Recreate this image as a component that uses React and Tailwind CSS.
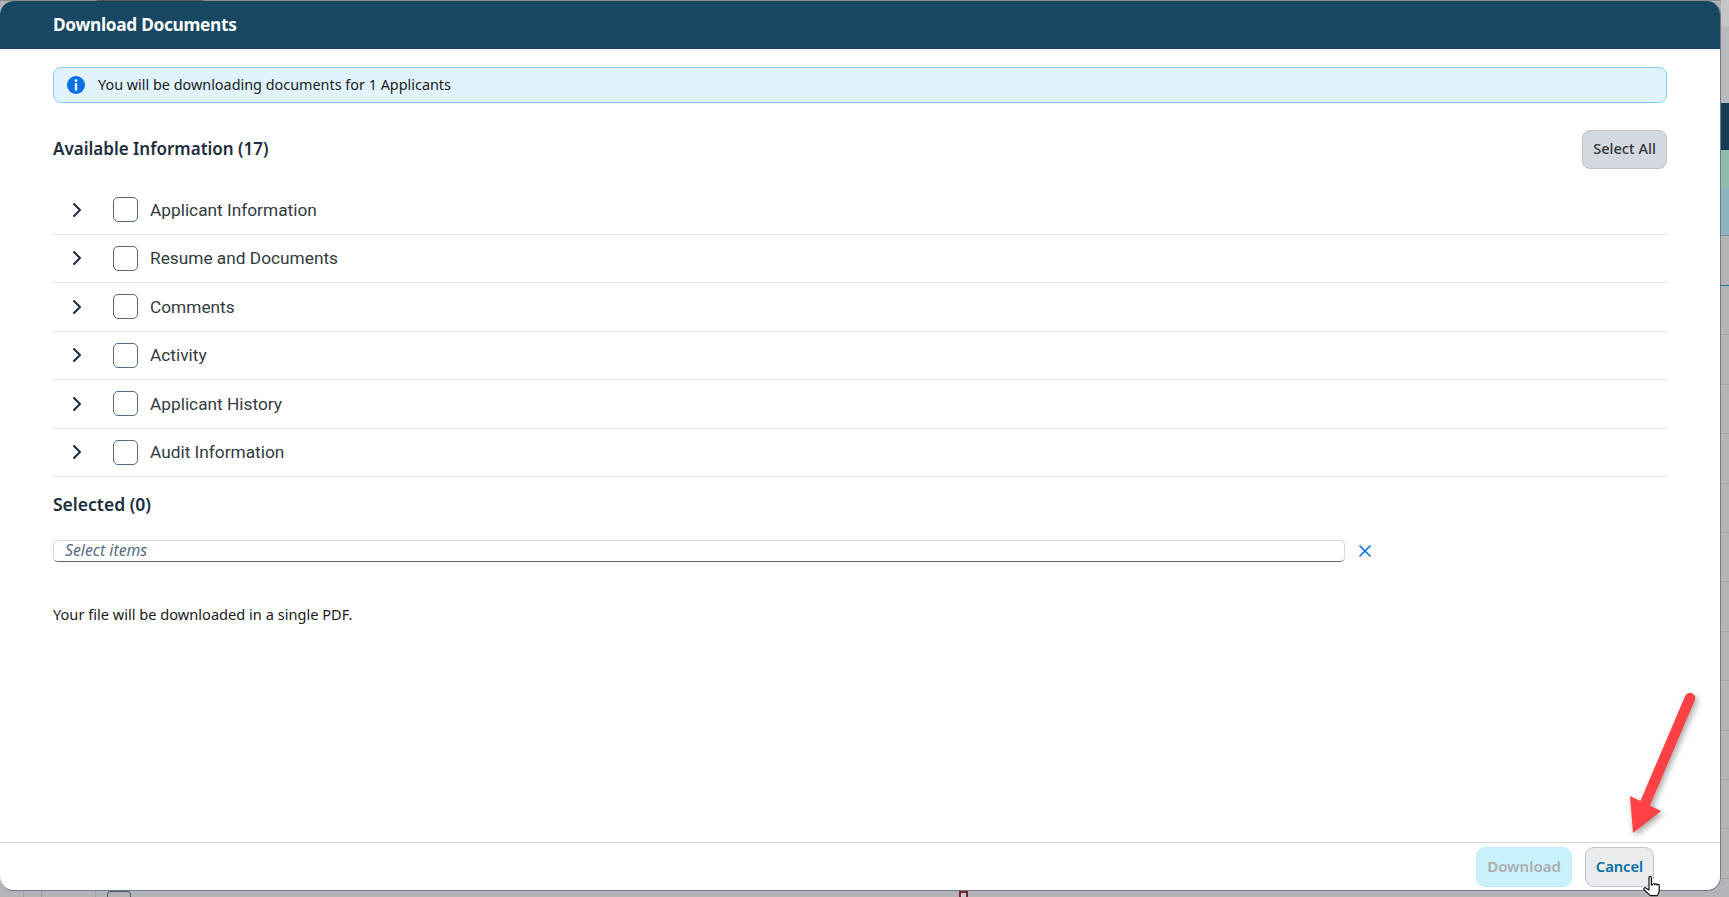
import React from "react";
import { ChevronRight, X } from "lucide-react";

const rows = ["Applicant Information", "Resume and Documents", "Comments", "Activity", "Applicant History", "Audit Information"];
const stripLines = [
  { h: "h-[50px]", c: "border-b border-[#1f6f9e]" },
  ...Array(12).fill({ h: "h-[49.4px]", c: "border-b border-[#a5a6a9]" }),
];

function Row({ label }) {
  return (
    <div className="flex h-[48.5px] items-center border-b border-[#e3e5e8] pl-[12px]">
      <ChevronRight className="h-[24px] w-[24px] text-[#1d2d3e]" strokeWidth={2} />
      <div className="ml-[24px] h-[25px] w-[25px] rounded-[5px] border border-[#556b82] bg-white" />
      <span className="ml-[12px] pt-[2px] font-['Roboto',sans-serif] text-[17.3px] text-[#343a40]">{label}</span>
    </div>
  );
}

export default function App() {
  return (
    <div className="relative flex h-[897px] w-[1729px] overflow-hidden bg-[#b3b4b7] font-['Noto_Sans',sans-serif]">
      <div className="flex w-[1721px] shrink-0 flex-col">
        <div className="flex h-px shrink-0 bg-[#8d8e90] pl-[97px]">
          <div className="h-px w-[106px] bg-[#5a5a5c]" />
        </div>
        <div className="flex h-[890px] shrink-0 flex-col overflow-hidden rounded-[14px] border-r border-b border-[#6d7c8a] bg-white">
          <header className="flex h-[48px] shrink-0 items-center bg-[#174763] pl-[53px] shadow-[0_2px_4px_rgba(0,0,0,0.08)]">
            <h1 className="text-[17.3px] font-bold tracking-[-0.3px] text-white">Download Documents</h1>
          </header>
          <main className="flex flex-1 flex-col px-[53px] pt-[18px]">
            <div className="flex h-[36px] items-center rounded-[8px] border border-[#84cdf9] bg-[#e0f3fe] pl-[13px]">
              <svg viewBox="0 0 18 18" className="h-[18px] w-[18px]">
                <circle cx="9" cy="9" r="9" fill="#0a6ee8" />
                <circle cx="9" cy="4.6" r="1.4" fill="#fff" />
                <rect x="7.8" y="7.2" width="2.4" height="7.4" fill="#fff" />
              </svg>
              <span className="ml-[13px] text-[14.4px] text-[#1b1b1b]">You will be downloading documents for 1 Applicants</span>
            </div>
            <div className="mt-[27px] flex h-[39px] items-center justify-between">
              <h2 className="-mt-[2px] text-[17px] font-semibold text-[#1d2d3e]">Available Information (17)</h2>
              <button className="h-[39px] w-[85px] rounded-[8px] border border-[#bcc3c9] bg-[#d3d9de] pb-[2px] text-[14.6px] font-medium text-[#32363a]">Select All</button>
            </div>
            <div className="mt-[17px]">
              {rows.map((r) => <Row key={r} label={r} />)}
            </div>
            <h2 className="mt-[15px] text-[17.5px] font-semibold leading-[24px] text-[#1d2d3e]">Selected (0)</h2>
            <div className="mt-[24px] flex items-center">
              <div className="flex h-[22px] w-[1292px] items-center rounded-[5px] border border-[#d3dae3] border-b-[#556b82] pl-[11px] text-[15.8px] italic text-[#556b82]">Select items</div>
              <X className="ml-[10px] h-[20px] w-[20px] text-[#0a6ee8]" strokeWidth={2} />
            </div>
            <p className="mt-[41px] text-[14.6px] leading-[22px] text-[#1b1b1b]">Your file will be downloaded in a single PDF.</p>
          </main>
          <footer className="flex h-[48px] shrink-0 items-center justify-end gap-[13px] border-t border-[#d5d7da] pr-[66px]">
            <button className="h-[40px] w-[96px] rounded-[9px] border border-[#bdeffc] bg-[#c9f2fd] text-[15px] font-semibold text-[#a9adb0]">Download</button>
            <button className="h-[40px] w-[69px] rounded-[9px] border border-[#bfc5cc] bg-[#e9ecee] text-[14.7px] font-semibold text-[#0a6ea4]">Cancel</button>
          </footer>
        </div>
        <div className="flex h-[6px] shrink-0">
          <div className="ml-[23px] h-full w-px bg-[#9d9ea1]" />
          <div className="ml-[17px] h-full w-px bg-[#9a9b9e]" />
          <div className="ml-[53px] h-full w-px bg-[#a0a1a4]" />
          <div className="ml-[11px] h-full w-[24px] rounded-t-[4px] border-x border-t border-[#4a5a6c]" />
          <div className="ml-[828px] h-full w-[9px] border-x-2 border-t-2 border-[#7d2633] bg-[#c9c9c9]" />
        </div>
      </div>
      <div className="flex flex-1 flex-col">
        <div className="h-[26px] bg-[#c6c6c6]" />
        <div className="h-[77px] bg-[#b8b9bb]" />
        <div className="h-[47px] bg-[#163c55]" />
        <div className="h-[38px] bg-[#8fbbae]" />
        <div className="h-[48px] border-b border-[#7f8a93] bg-[#8eb3c0]" />
        {stripLines.map((l, i) => <div key={i} className={`${l.h} ${l.c} shrink-0`} />)}
      </div>

      <svg viewBox="0 0 80 150" className="absolute top-[688px] left-[1622px] h-[150px] w-[80px] drop-shadow-[2px_3px_3px_rgba(0,0,0,0.35)]">
        <path d="M68 10 L22 118" stroke="#fe4144" strokeWidth="10.5" strokeLinecap="round" fill="none" />
        <path d="M8 108 L39 123 L11 145 Z" fill="#fe4144" />
      </svg>
      <svg viewBox="0 0 20 24" className="absolute top-[875px] left-[1642px] h-[24px] w-[20px]">
        <path d="M7 2.5c0-1.6 2.4-1.6 2.4 0v7.5l1-.2c0-1.4 2.2-1.4 2.3 0 .2-1.2 2.2-1.2 2.3.2.3-1 2.2-.8 2.2.6v5.4c0 2-1 3.4-2 4.6H8.5L2.2 15c-1-1.4.6-3 2-1.8L7 15V2.5z" fill="#fff" stroke="#111" strokeWidth="1.2" strokeLinejoin="round" />
      </svg>
    </div>
  );
}
